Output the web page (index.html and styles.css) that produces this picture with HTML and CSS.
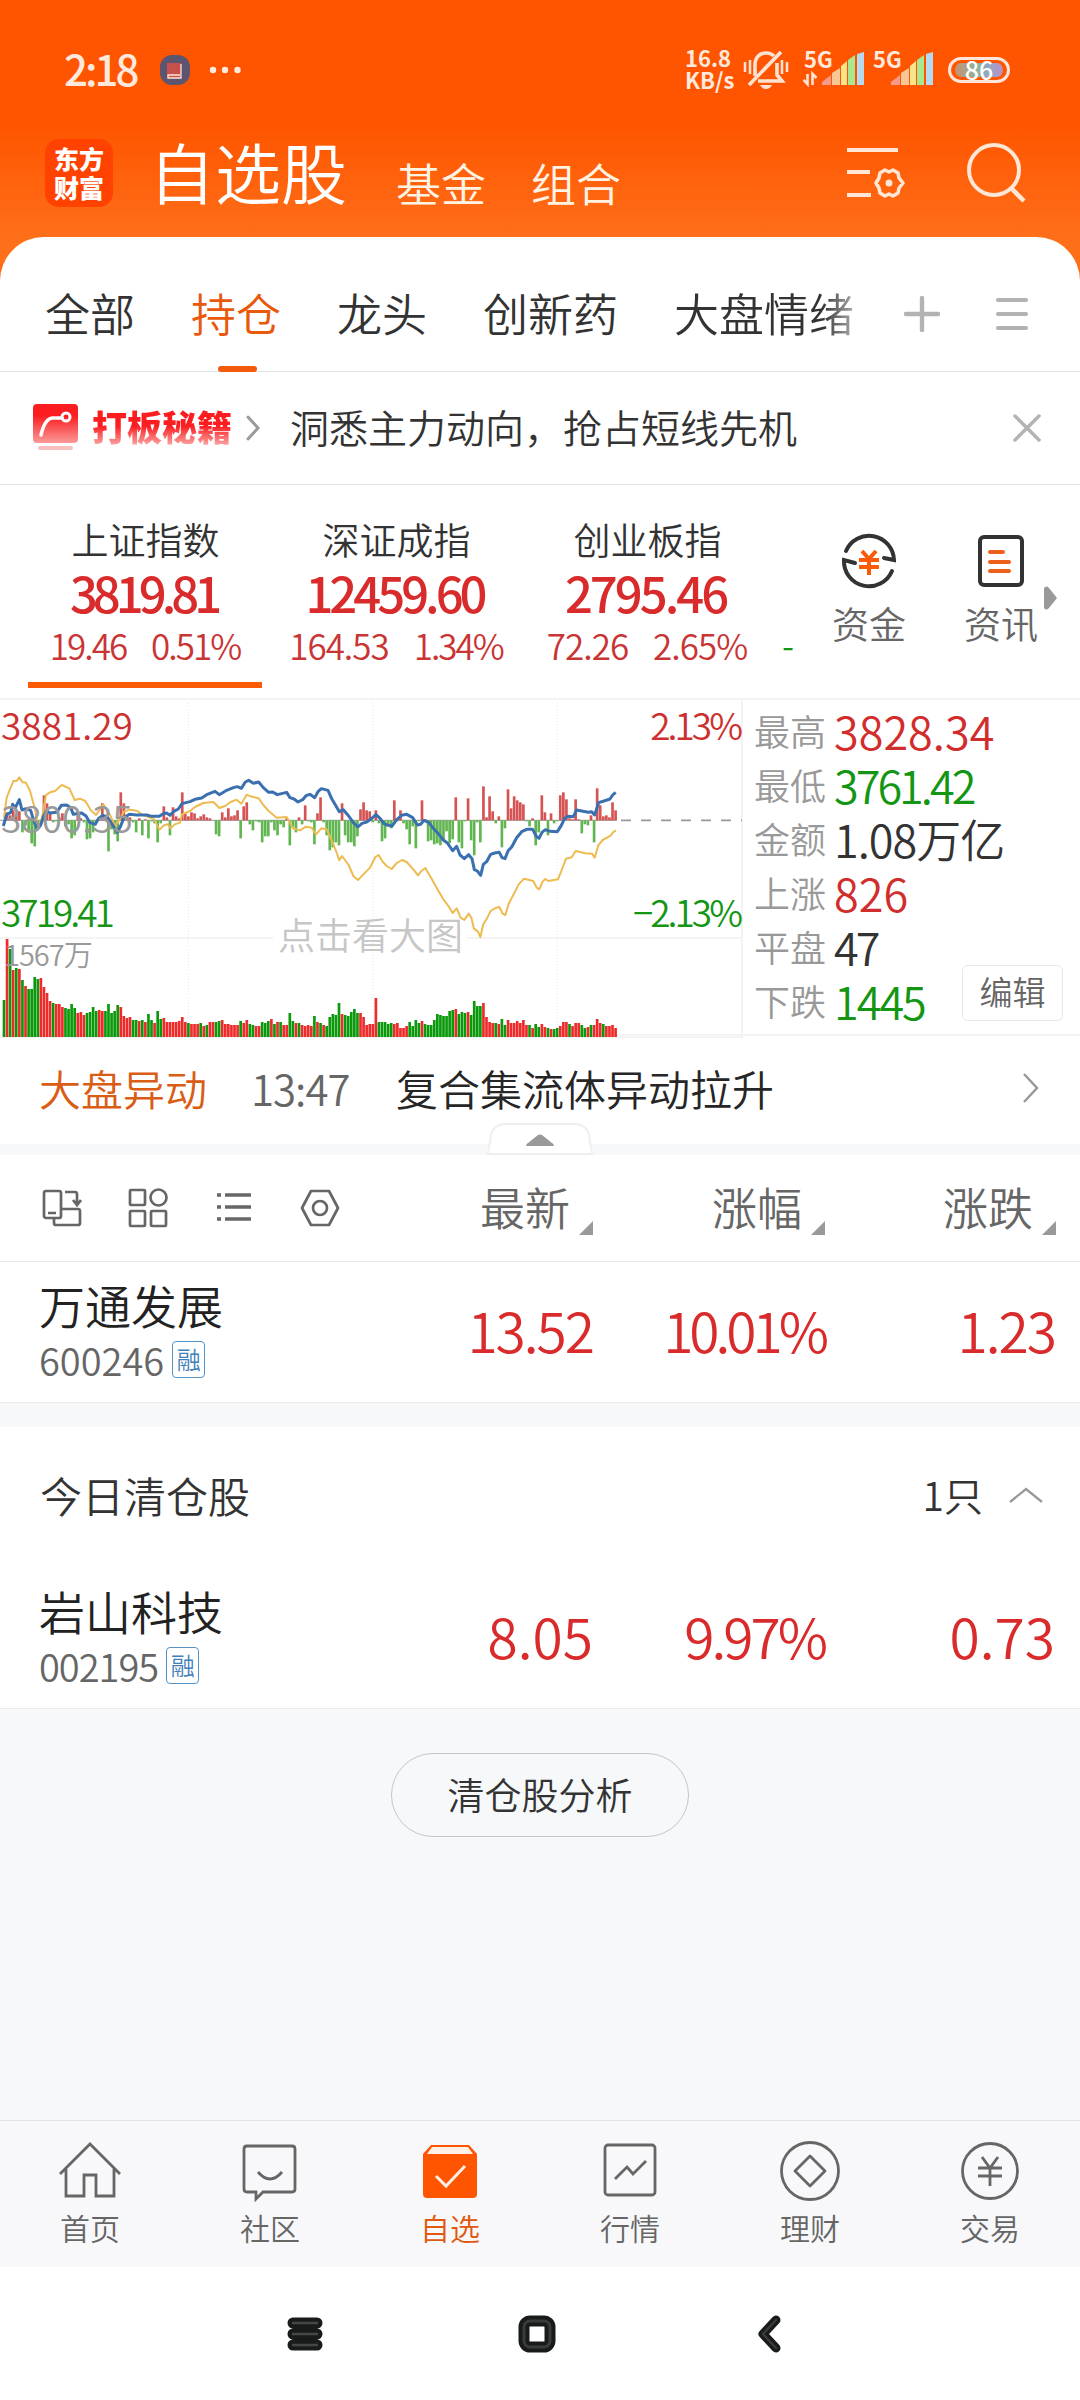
FILE: index.html
```html
<!DOCTYPE html>
<html lang="zh-CN">
<head>
  <meta charset="UTF-8">
  <title>自选股</title>
  <link rel="stylesheet" href="styles.css">
</head>
<body>

  <!-- Orange header -->
  <header class="top">
    <div class="status">
      <span class="time t3">2:18</span>
      <svg class="book" width="34" height="34" viewBox="0 0 34 34">
        <rect x="2" y="2" width="30" height="30" rx="12" fill="#5b5570"/>
        <rect x="9" y="10" width="14" height="15" rx="1" fill="#c8504c"/>
        <path d="M23 11v14H10v-3h12" fill="none" stroke="#ffe3d6" stroke-width="1.3"/>
      </svg>
      <svg class="dots" width="32" height="8" viewBox="0 0 32 8" fill="#ffeadd">
        <circle cx="4" cy="4" r="3.2"/><circle cx="16" cy="4" r="3.2"/><circle cx="28.5" cy="4" r="3.2"/>
      </svg>
      <div class="speed"><span>16.8</span><span>KB/s</span></div>
      <svg class="bell" width="46" height="42" viewBox="0 0 46 42" fill="none" stroke="#ffe3d2" stroke-width="3.600">
        <path d="M12 27V16C12 8 17 4 23 4q5 0 8 3M34 14v12l5 6H15M6 36 38 3" />
        <path d="M2 13v10M7 11v14M39 11v14M44 13v10" stroke-width="2.500"/>
        <path d="M17 36h12q-2 4-6 4t-6-4z" fill="#ffe3d2" stroke="none"/>
      </svg>
      <div class="signal">
        <span class="net">5G</span>
        <svg width="64" height="36" viewBox="0 0 64 36">
          <path d="M4.500 22v10l-4-4M9.500 33V22l4 4" fill="none" stroke="#ffe3d2" stroke-width="2.600"/>
          <path d="M19 33v-3l9-7v10z" fill="#f79a8b"/><path d="M29 33V21l8-5v17z" fill="#f8c795"/>
          <path d="M38 33V14l6-5v24z" fill="#fae48a"/><path d="M45 33V8l7-5v30z" fill="#a9e88e"/>
          <path d="M54 33V2l7-2v33z" fill="#b5d9f1"/>
        </svg>
      </div>
      <div class="signal second">
        <span class="net">5G</span>
        <svg width="64" height="36" viewBox="0 0 64 36">
          <path d="M19 33v-3l9-7v10z" fill="#f79a8b"/><path d="M29 33V21l8-5v17z" fill="#f8c795"/>
          <path d="M38 33V14l6-5v24z" fill="#fae48a"/><path d="M45 33V8l7-5v30z" fill="#a9e88e"/>
          <path d="M54 33V2l7-2v33z" fill="#b5d9f1"/>
        </svg>
      </div>
      <div class="battery"><span>86</span></div>
    </div>

    <div class="nav">
      <div class="logo"><span>东方</span><span>财富</span></div>
      <h1>自选股</h1>
      <span class="nav-link">基金</span>
      <span class="nav-link">组合</span>
      <svg class="icon-set" width="60" height="54" viewBox="0 0 60 54" fill="none" stroke="#ffe6d5" stroke-width="4.200">
        <path d="M1 4h51M1 26h23M1 49h24"/>
        <path d="M39 24l4 2 4-2 5 3 1 5 4 5-4 5-1 5-5 3-4-2-4 2-5-3-1-5-3-5 3-5 1-5z" stroke-width="3.600" stroke-linejoin="round"/>
        <circle cx="43" cy="37" r="3.500" fill="#ffe6d5" stroke="none"/>
      </svg>
      <svg class="icon-search" width="60" height="60" viewBox="0 0 60 60" fill="none" stroke="#ffe6d5" stroke-width="4">
        <circle cx="27" cy="27" r="25"/><path d="M44 45l13 13" stroke-width="4.500"/>
      </svg>
    </div>
  </header>

  <main class="sheet">
    <!-- Group tabs -->
    <nav class="tabs">
      <div class="tab-list">
        <span>全部</span>
        <span class="active">持仓</span>
        <span>龙头</span>
        <span>创新药</span>
        <span class="fade">大盘情绪</span>
      </div>
      <svg width="36" height="36" viewBox="0 0 36 36" stroke="#b3b3b3" stroke-width="4.400" stroke-linecap="round"><path d="M18 2v32M2 18h32"/></svg>
      <svg class="tab-menu" width="34" height="34" viewBox="0 0 34 34" stroke="#b3b3b3" stroke-width="4.200" stroke-linecap="round"><path d="M3 3h28M3 17h28M3 31h28"/></svg>
    </nav>

    <!-- Promo -->
    <div class="promo">
      <svg width="46" height="48" viewBox="0 0 46 48">
        <defs><linearGradient id="red" x1="0" y1="0" x2="0" y2="1"><stop offset=".3" stop-color="#fb1d20"/><stop offset="1" stop-color="#fa9a98"/></linearGradient></defs>
        <rect x="0" y="0" width="45" height="39" rx="4" fill="url(#red)"/>
        <path d="M8 31q4-17 12-17h9" fill="none" stroke="#fff" stroke-width="3.500" stroke-linecap="round"/>
        <circle cx="33" cy="13" r="4" fill="none" stroke="#fff" stroke-width="3"/>
        <path d="M7 44h31" stroke="#f9c0c0" stroke-width="4" stroke-linecap="round"/>
      </svg>
      <span class="promo-name">打板秘籍</span>
      <svg width="16" height="26" viewBox="0 0 16 26" fill="none" stroke="#9a9a9a" stroke-width="3" stroke-linecap="round"><path d="M3 2l10 11L3 24"/></svg>
      <span class="promo-text">洞悉主力动向，抢占短线先机</span>
      <svg class="close" width="30" height="30" viewBox="0 0 30 30" stroke="#b3b3b3" stroke-width="3.500" stroke-linecap="round"><path d="M3 3l24 24M27 3L3 27"/></svg>
    </div>

    <!-- Indices -->
    <section class="indices">
      <div class="index selected">
        <span class="name">上证指数</span>
        <b class="t5">3819.81</b>
        <p><span class="t2">19.46</span><span class="t2">0.51%</span></p>
      </div>
      <div class="index">
        <span class="name">深证成指</span>
        <b class="t4">12459.60</b>
        <p><span class="t1">164.53</span><span class="t2">1.34%</span></p>
      </div>
      <div class="index">
        <span class="name">创业板指</span>
        <b class="t3">2795.46</b>
        <p><span class="t1">72.26</span><span class="t1">2.65%</span></p>
      </div>
      <span class="cut">-</span>
      <div class="tool">
        <svg width="58" height="58" viewBox="0 0 58 58" fill="none" stroke="#333" stroke-width="4">
          <path d="M6 19A25 25 0 0 1 54 28l-10-2M52 39A25 25 0 0 1 4 28l11 3" stroke-linecap="round"/>
          <path d="M22 19l7 8 7-8M19 28h20M19 35h20M29 27v16" stroke="#fb5a07"/>
        </svg>
        <span>资金</span>
      </div>
      <div class="tool">
        <svg width="58" height="58" viewBox="0 0 58 58" fill="none" stroke="#333" stroke-width="4">
          <rect x="8" y="5" width="42" height="48" rx="4"/>
          <path d="M18 20h13M18 30h19M18 39h19" stroke="#ed6019" stroke-linecap="round"/>
        </svg>
        <span>资讯</span>
      </div>
      <svg class="more" width="14" height="24" viewBox="0 0 14 24" fill="#999"><path d="M0 2q3-3 5 0l8 10-8 10q-3 3-5 0z"/></svg>
    </section>

    <!-- Minute chart -->
    <section class="market">
      <div class="chart">
        <svg id="plot" width="743" height="338" viewBox="0 27 2229 1014">
          <g fill="none" stroke="#f1f1f1" stroke-width="5">
            <path d="M0 741H820M1400 741H2226M2226 30V1040M0 1039H2229"/>
            <path d="M565 36V1038M1119 36V1038M1672 36V1038" stroke="#e4e4e4" stroke-width="3" stroke-dasharray="3 6"/>
          </g>
          <path d="M0 388H1850" stroke="#a9a9a9" stroke-width="4"/>
          <path d="M1863 388H2226" stroke="#999" stroke-width="5" stroke-dasharray="30 30"/>
          <g id="bars"></g>
          <polyline fill="none" stroke="#edbb50" stroke-width="6" stroke-linejoin="round" points="12,380 20,320 40,270 50,270 58,259 68,274 78,275 90,300 104,350 112,392 120,402 128,370 138,312 150,304 165,300 185,282 208,292 224,327 240,323 256,330 272,357 288,372 310,340 330,372 345,405 356,390 372,362 388,356 402,358 412,360 425,370 445,378 463,385 478,416 492,403 504,400 512,412 524,400 540,395 546,370 570,360 585,348 610,336 640,333 658,351 675,345 692,333 710,326 724,338 740,311 752,316 776,322 790,342 806,360 830,380 860,378 880,413 900,418 918,407 935,410 948,430 964,412 980,415 996,450 1008,480 1018,508 1026,495 1046,522 1060,555 1074,567 1090,550 1110,530 1126,498 1136,492 1148,512 1160,525 1175,534 1190,516 1206,507 1220,513 1240,535 1254,553 1264,540 1276,531 1290,555 1310,590 1330,625 1345,645 1358,666 1370,652 1382,680 1393,687 1406,668 1414,680 1422,713 1434,722 1441,738 1450,700 1462,680 1472,660 1486,651 1498,648 1508,668 1516,672 1526,638 1540,612 1556,580 1572,563 1588,567 1600,570 1610,590 1618,595 1628,572 1636,564 1645,570 1674,565 1684,540 1698,503 1715,499 1727,480 1740,483 1755,487 1776,488 1784,500 1795,463 1808,447 1832,434 1840,423 1848,418"/>
          <polyline fill="none" stroke="#3a70b0" stroke-width="9" stroke-linejoin="round" points="10,405 20,370 32,365 38,340 46,350 58,326 66,357 78,353 92,358 100,385 112,415 122,402 132,372 140,360 150,366 170,364 184,343 200,342 212,350 220,370 245,366 258,375 270,395 286,400 296,382 308,373 322,378 338,402 352,424 362,405 372,380 388,370 410,372 440,372 456,376 478,376 490,368 500,366 510,373 520,362 535,354 546,338 570,332 585,325 605,321 620,311 645,301 658,311 680,298 700,290 712,287 724,292 736,273 746,268 760,277 776,273 790,290 806,304 818,303 832,311 860,304 870,320 882,324 894,333 908,326 918,314 930,310 944,320 954,302 964,293 984,298 996,325 1008,345 1018,362 1030,356 1046,375 1060,395 1074,408 1086,397 1100,393 1112,385 1128,371 1140,382 1152,398 1164,403 1176,405 1190,386 1205,373 1220,370 1238,380 1252,402 1262,400 1272,388 1286,394 1300,412 1315,428 1330,447 1342,456 1358,479 1370,466 1380,492 1393,503 1406,491 1416,503 1423,536 1432,540 1442,553 1450,520 1460,512 1472,490 1484,486 1498,484 1506,500 1515,503 1524,480 1535,468 1550,440 1565,422 1580,415 1598,415 1608,435 1617,442 1626,424 1636,416 1650,421 1672,422 1684,403 1694,382 1704,376 1720,377 1730,357 1745,360 1765,364 1775,362 1784,372 1796,335 1812,330 1830,324 1838,312 1847,304"/>
        </svg>
        <span class="mark high">3881.29</span>
        <span class="mark mid">3800.35</span>
        <span class="mark low t3">3719.41</span>
        <span class="mark high-rate t3">2.13%</span>
        <span class="mark low-rate t3">−2.13%</span>
        <span class="mark volume t1">1567万</span>
        <span class="mark hint">点击看大图</span>
      </div>
      <div class="facts">
        <div><label>最高</label><span class="red t0">3828.34</span></div>
        <div><label>最低</label><span class="green t3">3761.42</span></div>
        <div><label>金额</label><span class="t1">1.08万亿</span></div>
        <div><label>上涨</label><span class="red t0">826</span></div>
        <div><label>平盘</label><span class="t3">47</span></div>
        <div><label>下跌</label><span class="green t2">1445</span></div>
        <button class="edit">编辑</button>
      </div>
    </section>

    <!-- News line -->
    <div class="news">
      <span class="news-tag">大盘异动</span>
      <span class="news-time t1">13:47</span>
      <span class="news-text">复合集流体异动拉升</span>
      <svg width="18" height="32" viewBox="0 0 18 32" fill="none" stroke="#999" stroke-width="2.500"><path d="M2 2l13 14L2 30"/></svg>
      <svg class="pull" width="106" height="33" viewBox="0 0 106 33">
        <path d="M1 31L4 12Q7 1 18 1h70q11 0 14 11l3 19z" fill="#fff" stroke="#eeeff1" stroke-width="2"/>
        <path d="M39 23q0-2 2-3l10-8q2-1 4 0l10 8q2 1 2 3z" fill="#999"/>
      </svg>
    </div>
  </main>

  <!-- Stock table -->
  <section class="stocks">
    <div class="row head">
      <div class="views">
        <svg width="40" height="40" viewBox="0 0 40 40" fill="none" stroke="#666" stroke-width="2.700">
          <rect x="2" y="3" width="17" height="27" rx="2"/><path d="M6 25h8M23 4h10q2 0 2 2v10M31 12l4 5 4-5M19 21h17q2 0 2 2v12q0 2-2 2H14q-2 0-2-2v-5"/>
        </svg>
        <svg width="40" height="40" viewBox="0 0 40 40" fill="none" stroke="#666" stroke-width="2.700">
          <rect x="2" y="2" width="15" height="15" rx="1"/><circle cx="30.500" cy="9.500" r="8"/><rect x="2" y="23" width="15" height="15" rx="1"/><rect x="23" y="23" width="15" height="15" rx="1"/>
        </svg>
        <svg width="40" height="40" viewBox="0 0 40 40" fill="none" stroke="#666" stroke-width="3.600">
          <path d="M3 7h4M3 19h4M3 31h4M11 7h26M11 19h26M11 31h26"/>
        </svg>
        <svg width="40" height="40" viewBox="0 0 40 40" fill="none" stroke="#666" stroke-width="2.700" stroke-linejoin="round">
          <path d="M11 3h18l9 17-9 17H11L2 20z"/><circle cx="20" cy="20" r="7"/>
        </svg>
      </div>
      <div class="col sort">最新</div>
      <div class="col sort">涨幅</div>
      <div class="col sort">涨跌</div>
    </div>
    <div class="row">
      <div class="stock">
        <strong>万通发展</strong>
        <div class="code"><span>600246</span><i>融</i></div>
      </div>
      <div class="col t2">13.52</div>
      <div class="col t4">10.01%</div>
      <div class="col t2">1.23</div>
    </div>
  </section>

  <section class="cleared">
    <div class="cleared-head">
      <span>今日清仓股</span>
      <span class="count">1只</span>
      <svg width="36" height="18" viewBox="0 0 36 18" fill="none" stroke="#999" stroke-width="2.300"><path d="M2 16L18 3l16 13"/></svg>
    </div>
    <div class="row">
      <div class="stock">
        <strong>岩山科技</strong>
        <div class="code"><span class="t1">002195</span><i>融</i></div>
      </div>
      <div class="col t0">8.05</div>
      <div class="col t3">9.97%</div>
      <div class="col t0">0.73</div>
    </div>
  </section>

  <div class="rest">
    <button class="analyse">清仓股分析</button>
  </div>

  <!-- App tab bar -->
  <nav class="bottom">
    <div>
      <svg width="64" height="64" viewBox="0 0 64 64" fill="none" stroke="#666" stroke-width="2.800"><path d="M2 36L32 6l30 30M8 31v27h18V37h12v21h18V31"/></svg>
      <span>首页</span>
    </div>
    <div>
      <svg width="64" height="64" viewBox="0 0 64 64" fill="none" stroke="#666" stroke-width="2.800"><path d="M8 8h46q3 0 3 3v40q0 3-3 3H25l-7 7v-7H9q-3 0-3-3V11q0-3 3-3zM20 34q12 14 24 0"/></svg>
      <span>社区</span>
    </div>
    <div class="on">
      <svg width="64" height="64" viewBox="0 0 64 64">
        <path d="M5 16l8-9h38l8 9v40q0 4-4 4H9q-4 0-4-4z" fill="#ff5500"/>
        <path d="M9 16l5-7h36l5 7z" fill="#fff0e6"/>
        <path d="M18 38l10 10 19-20" fill="none" stroke="#fff0e6" stroke-width="3"/>
      </svg>
      <span>自选</span>
    </div>
    <div>
      <svg width="64" height="64" viewBox="0 0 64 64" fill="none" stroke="#666" stroke-width="2.800"><rect x="7" y="7" width="50" height="50" rx="3"/><path d="M17 41l12-12 6 7 13-13"/></svg>
      <span>行情</span>
    </div>
    <div>
      <svg width="64" height="64" viewBox="0 0 64 64" fill="none" stroke="#666" stroke-width="2.800"><circle cx="32" cy="33" r="28.500"/><path d="M32 18l15 15-15 15-15-15z" stroke-linejoin="round"/></svg>
      <span>理财</span>
    </div>
    <div>
      <svg width="64" height="64" viewBox="0 0 64 64" fill="none" stroke="#666" stroke-width="2.800"><circle cx="32" cy="33" r="27.500"/><path d="M24 19l8 11 8-11M20 30h24M20 38h24M32 30v18"/></svg>
      <span>交易</span>
    </div>
  </nav>

  <!-- Android keys -->
  <footer class="keys">
    <svg width="38" height="38" viewBox="0 0 38 38" stroke-linejoin="round"><path d="M7 8h24M7 19h24M7 30h24" stroke="#191b1b" stroke-width="11" stroke-linecap="round"/><path d="M5 8h28M5 19h28M5 30h28" stroke="#191b1b" stroke-width="8"/><path d="M6 8h26M6 19h26M6 30h26" stroke="#444747" stroke-width="2.500"/></svg>
    <svg width="38" height="38" viewBox="0 0 38 38" fill="none"><rect x="6" y="6" width="26" height="26" rx="6" stroke="#191b1b" stroke-width="11"/><rect x="6" y="6" width="26" height="26" rx="6" stroke="#393c3c" stroke-width="3"/></svg>
    <svg width="38" height="38" viewBox="0 0 38 38" fill="none" stroke-linecap="round" stroke-linejoin="round"><path d="M26 5L13 19l13 14" stroke="#191b1b" stroke-width="9"/><path d="M26 5L13 19l13 14" stroke="#393c3c" stroke-width="2.500"/></svg>
  </footer>

  <script src="chart.js"></script>
</body>
</html>
```
FILE: styles.css
```css
* {
  box-sizing: border-box;
}
body {
  margin: 0;
  width: 1080px;
  height: 2400px;
  display: flex;
  flex-direction: column;
  font-family: "Noto Sans CJK SC", sans-serif;
  font-weight: 350;
  line-height: 1;
  color: #333;
  background: #f7f8fa;
  overflow: hidden;
}
svg {
  display: block;
  flex: none;
}
p, h1 {
  margin: 0;
  font-weight: 350;
}
button {
  font: inherit;
  padding: 0;
}

/* number tracking */
.t0 { letter-spacing: 0; }
.t1 { letter-spacing: -1px; }
.t2 { letter-spacing: -2px; }
.t3 { letter-spacing: -3px; }
.t4 { letter-spacing: -4px; }
.t5 { letter-spacing: -5px; }

.red { color: #d22d2d; }
.green { color: #149614; }

/* header */
.top {
  height: 281px;
  margin-bottom: -44px;
  background: linear-gradient(#ff5500 125px, #ff6f1a 240px);
  color: #fff;
}
.status {
  height: 125px;
  padding: 15px 70px 0 64px;
  display: flex;
  align-items: center;
  color: #ffe9dc;
}
.time {
  font-size: 42px;
  font-weight: 500;
  width: 94px;
  margin-top: -5px;
}
.dots {
  margin-left: 17px;
}
.speed {
  display: flex;
  flex-direction: column;
  font-size: 22px;
  line-height: 22px;
  font-weight: 700;
  width: 58px;
  margin: -4px 0 0 auto;
}
.bell {
  margin-right: 14px;
}
.signal {
  position: relative;
  width: 64px;
  margin-right: 5px;
}
.net {
  position: absolute;
  top: -5px;
  left: 1px;
  font-size: 22px;
  font-weight: 700;
}
.second {
  margin-right: 12px;
}
.battery {
  width: 62px;
  height: 26px;
  padding: 3px 4px;
  border: 3px solid #ffe6d9;
  border-radius: 13px;
  font-size: 25px;
  font-weight: 500;
  line-height: 12px;
  color: #fff;
  text-align: center;
  background: linear-gradient(90deg, #c99070, #8db29a 45%, #90a8c8 70%, #c090c0) content-box;
}
.nav {
  height: 96px;
  padding-left: 45px;
  display: flex;
  align-items: center;
}
.logo {
  width: 68px;
  height: 68px;
  border-radius: 14px;
  background: #ff4200;
  display: flex;
  flex-direction: column;
  align-items: center;
  justify-content: center;
  font-size: 25px;
  font-weight: 900;
  line-height: 29px;
}
h1 {
  font-size: 66px;
  margin: -6px 49px 0 36px;
}
.nav-link {
  font-size: 45px;
  margin: 18px 45px 0 0;
  color: #fff3e4;
}
.icon-set {
  margin-left: 180px;
}
.icon-search {
  margin-left: 61px;
}

/* white sheet */
.sheet {
  height: 907px;
  background: #fff;
  border-radius: 44px 44px 0 0;
  flex: none;
}
.tabs {
  height: 135px;
  padding: 20px 51px 0 45px;
  display: flex;
  align-items: center;
  border-bottom: 1px solid #e3e3e3;
}
.tab-list {
  display: flex;
  gap: 56px;
  height: 115px;
  line-height: 112px;
  font-size: 45px;
  margin-right: 50px;
}
.active {
  color: #e9590c;
  position: relative;
}
.active::after {
  content: "";
  position: absolute;
  left: 27px;
  bottom: 0;
  width: 39px;
  height: 6px;
  border-radius: 3px;
  background: #f25a0c;
}
.fade {
  background: linear-gradient(90deg, #333 82%, #aaa);
  background-clip: text;
  color: transparent;
}
.tab-menu {
  margin-left: auto;
}
.promo {
  height: 113px;
  padding: 0 38px 0 33px;
  display: flex;
  align-items: center;
  border-bottom: 1px solid #e3e3e3;
}
.promo-name {
  margin: -4px 13px 0 13px;
  font-size: 35px;
  font-weight: 900;
  line-height: 46px;
  background: linear-gradient(#fb1d20 50%, #fba09e 90%);
  background-clip: text;
  color: transparent;
}
.promo-text {
  margin: -4px 0 0 29px;
  font-size: 39px;
}
.close {
  margin-left: auto;
}
.indices {
  height: 213px;
  padding-left: 20px;
  display: flex;
  position: relative;
}
.index {
  width: 251px;
  padding-top: 36px;
  text-align: center;
  display: flex;
  flex-direction: column;
  align-items: center;
}
.name {
  font-size: 37px;
}
.index b {
  font-size: 49px;
  font-weight: 500;
  line-height: 54px;
  margin: 7px 0 0 -4px;
  color: #d92b2b;
}
.index p {
  display: flex;
  gap: 25px;
  margin: 5px 0 0 -1px;
  font-size: 35px;
  line-height: 42px;
  color: #c93434;
}
.selected {
  background: linear-gradient(#fb5a07, #fb5a07) 8px 197px / 234px 6px no-repeat;
}
.cut {
  width: 30px;
  padding: 141px 0 0 9px;
  font-size: 35px;
  color: #149614;
}
.tool {
  width: 132px;
  padding-top: 47px;
  display: flex;
  flex-direction: column;
  align-items: center;
  gap: 15px;
  font-size: 37px;
  color: #666;
}
.more {
  position: absolute;
  left: 1044px;
  top: 101px;
}

/* chart */
.market {
  height: 338px;
  display: flex;
  border-top: 2px solid #f3f3f3;
  border-bottom: 2px solid #f3f3f3;
}
.chart {
  width: 743px;
  position: relative;
}
.mark {
  position: absolute;
  left: 1px;
  font-size: 37px;
}
.high, .high-rate { top: 6px; color: #cc3030; }
.low, .low-rate { top: 193px; color: #149614; }
.mid { top: 99px; color: #999; }
.chart .high-rate, .chart .low-rate { left: auto; right: 3px; }
.volume { top: 239px; left: 4px; font-size: 29px; color: #999; }
.hint { top: 216px; left: 278px; color: #c6c6c6; }
.facts {
  position: relative;
  flex: 1;
  padding: 3px 0 0 11px;
}
.facts div {
  height: 54px;
  display: flex;
  align-items: center;
  font-size: 45px;
}
.facts label {
  width: 80px;
  font-size: 36px;
  color: #999;
}
.edit {
  position: absolute;
  right: 17px;
  bottom: 13px;
  width: 101px;
  height: 56px;
  border: 1px solid #e8e8e8;
  border-radius: 6px;
  background: #fff;
  color: #666;
  font-size: 33px;
  padding-bottom: 4px;
}
.news {
  height: 108px;
  padding: 0 40px 5px 39px;
  display: flex;
  align-items: center;
  font-size: 42px;
  position: relative;
}
.news svg {
  margin-left: auto;
}
.news-tag {
  color: #d95d14;
  width: 212px;
}
.news-time {
  color: #666;
  width: 145px;
}
.news-text {
  color: #262626;
}
.news .pull {
  position: absolute;
  left: 487px;
  top: 87px;
}

/* stock rows */
.stocks {
  margin-top: 11px;
  background: #fff;
  border-bottom: 1px solid #ebebeb;
}
.row {
  height: 140px;
  padding: 0 25px 0 39px;
  display: grid;
  grid-template-columns: 323px 231px 232px 230px;
  align-items: center;
}
.head {
  height: 107px;
  padding-left: 41px;
  grid-template-columns: 321px 231px 232px 231px;
  border-bottom: 1px solid #e8e8e8;
}
.views {
  display: flex;
  gap: 46px;
  padding-left: 1px;
}
.col {
  text-align: right;
  font-size: 55px;
  color: #d92b2b;
  padding-bottom: 6px;
}
.sort {
  font-size: 45px;
  color: #666;
  padding: 0 23px 4px 0;
  position: relative;
}
.sort::after {
  content: "";
  position: absolute;
  right: 0;
  bottom: -2px;
  border: 7px solid #999;
  border-top-color: transparent;
  border-left-color: transparent;
}
.stock strong {
  display: block;
  font-size: 46px;
  font-weight: 350;
  color: #222;
}
.stock {
  padding-bottom: 5px;
}
.code {
  display: flex;
  align-items: center;
  gap: 8px;
  margin-top: 14px;
  font-size: 38px;
  color: #666;
}
.code i {
  width: 33px;
  height: 37px;
  line-height: 33px;
  border: 1px solid #5593c6;
  border-radius: 4px;
  color: #3f80b8;
  font-size: 24px;
  font-style: normal;
  text-align: center;
}
.cleared {
  margin-top: 24px;
  background: #fff;
  border-bottom: 1px solid #ebebeb;
}
.cleared-head {
  height: 141px;
  padding: 0 36px 6px 40px;
  display: flex;
  align-items: center;
  font-size: 42px;
}
.count {
  margin: 0 25px 0 auto;
  font-size: 39px;
}
.rest {
  flex: 1;
  padding-top: 44px;
  text-align: center;
}
.analyse {
  width: 298px;
  height: 84px;
  border: 1px solid #c4c6c8;
  border-radius: 42px;
  background: none;
  color: #333;
  font-size: 37px;
  padding-bottom: 2px;
}

/* bottom */
.bottom {
  height: 147px;
  padding-top: 17px;
  display: flex;
  border-top: 1px solid #e2e4e6;
  background: #f8f8fa;
  font-size: 30px;
  color: #666;
}
.bottom div {
  width: 180px;
  display: flex;
  flex-direction: column;
  align-items: center;
  gap: 10px;
}
.bottom .on {
  color: #e0590f;
}
.keys {
  height: 133px;
  padding-right: 7px;
  display: flex;
  justify-content: center;
  align-items: center;
  gap: 194px;
  background: #fff;
}
```
FILE: chart.js
```js
// signed bars: positive is red, negative is green
const volume = [-37,98,-88,67,-69,68,-57,51,-48,-48,-60,-58,59,50,44,36,-34,33,33,30,-29,-28,-33,-29,24,25,22,-24,-25,-30,-26,27,26,-26,-33,-24,-26,-32,30,21,19,20,-17,-17,16,-17,15,-23,-17,14,-26,-18,19,15,15,15,15,16,20,15,-14,13,13,13,-14,11,-12,15,15,-15,-16,17,13,13,12,12,12,-16,14,17,-13,-12,11,11,-15,-14,-16,18,-13,15,-15,12,12,-24,-16,14,-14,12,11,12,11,-21,15,-14,12,-11,-20,-23,-22,-34,23,-22,-21,-25,-28,-24,24,20,12,13,13,39,
  -15,-15,-15,-13,-14,13,14,9,9,11,-15,-11,-17,-14,16,-13,-12,-12,-17,-23,-22,-21,-21,-26,-27,28,-23,-25,-24,25,-22,-36,-31,-31,34,20,15,14,-14,13,-18,-12,17,14,14,16,14,17,12,-12,9,-13,-10,13,10,-9,8,-8,-9,11,15,15,-13,11,14,14,-12,-9,10,-12,12,18,14,-13,11,11,12,9];

const flow = [0,8,5,10,5,9,-12,-5,-10,-23,-26,-9,-4,25,17,7,-2,-1,3,7,-6,-4,-18,-15,5,2,-2,-19,-18,-12,-2,1,17,2,-31,-9,-14,-21,28,17,5,3,-2,-12,2,-15,1,-18,-1,-3,-22,-3,14,3,-15,13,4,2,28,7,4,8,7,2,4,6,3,2,0,-14,-16,8,3,12,4,5,10,-18,14,18,-4,-10,-1,-2,-22,-16,-16,-2,-10,-15,-4,-7,2,-25,-7,-12,3,-4,15,-1,-2,-24,7,23,-2,-15,-30,-27,-22,-25,17,-15,-22,-22,-26,-16,11,18,10,9,-2,10,
  -3,-21,-18,-5,-8,20,-1,10,-3,-9,-24,-6,-28,-1,20,1,-21,-20,-24,-23,-25,-20,-11,-23,-19,23,-22,-28,-1,22,-20,-35,-2,-22,34,3,24,9,-3,4,-27,-8,31,12,24,20,18,16,-1,-6,2,-25,-12,25,8,-15,7,-3,-1,25,28,21,2,1,21,1,-13,-4,-5,5,-22,32,15,4,5,3,18,10];

function bar(i, top, height, color) {
  return `<rect x="${8 + i * 9.22}" y="${top}" width="8" height="${height}" fill="${color}"/>`;
}

let html = "";
flow.forEach((v, i) => {
  const h = Math.abs(v) * 3;
  html += v > 0 ? bar(i, 388 - h, h, "#d55353") : bar(i, 388, h, "#62b652");
});
volume.forEach((v, i) => {
  const h = Math.abs(v) * 3;
  html += bar(i, 1038 - h, h, v > 0 ? "#ee2b2b" : "#0a990a");
});
document.getElementById("bars").innerHTML = html;
```
